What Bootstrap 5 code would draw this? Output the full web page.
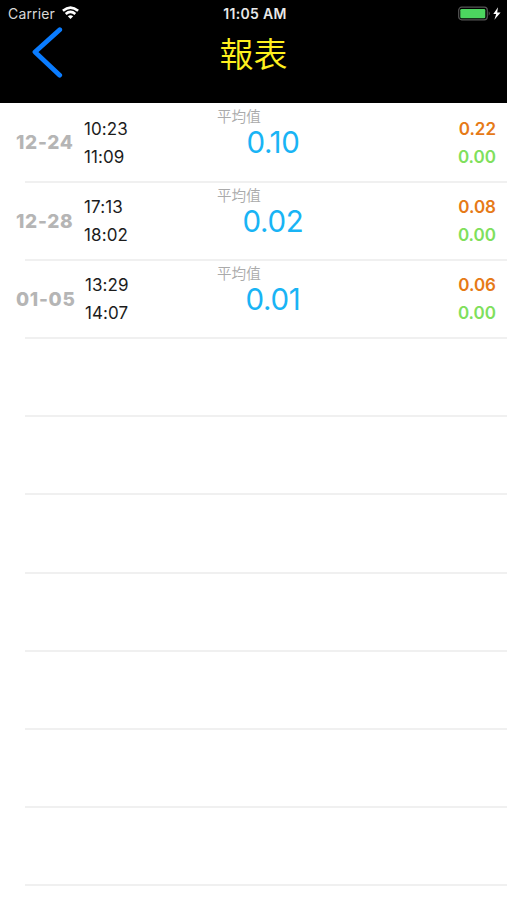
<!DOCTYPE html>
<html lang="zh-Hant">
<head>
<meta charset="utf-8">
<meta name="viewport" content="width=device-width, initial-scale=1">
<title>報表</title>
<link href="https://cdn.jsdelivr.net/npm/bootstrap@5.3.0/dist/css/bootstrap.min.css" rel="stylesheet">
<style>
body{font-family:Inter,"Noto Sans CJK TC",sans-serif;height:900px;overflow:hidden}
.app-head{height:103.4px}
.status{height:27px;font-size:14px;line-height:27px;padding:0 6px 0 8px}
.status>*{flex:1 1 0}
.status svg{margin-bottom:2px}
.wifi{margin-left:7px}
.carrier{color:#d8d8d8;letter-spacing:.15px}
.clock{font-weight:600;color:#e8e8e8;font-size:14px;letter-spacing:.3px;padding-left:1px}
.title-bar{display:grid;grid-template-columns:96px 1fr 96px;height:52px}
.back{padding:0 0 2px 32px;line-height:0;border:0;background:none;text-align:left}
.title{font-size:34px;font-weight:350;line-height:51px;color:#fff01e;font-family:"Noto Sans CJK TC",sans-serif}
.entry{height:78.2px;display:grid;grid-template-columns:68px 120px 138px 1fr;padding:0 11px 0 16px;position:relative}
.entry::after{content:"";position:absolute;left:25px;right:0;bottom:-1px;height:2px;background:#f0f0f0}
.day{font-size:19px;font-weight:800;color:#b5b5b5;line-height:79px;letter-spacing:.7px}
.pair{font-size:17px;line-height:27.8px;padding-top:12.4px}
.times{color:#1c1c1c;letter-spacing:.1px}
.times.nudge{padding-left:1px}
.vals{font-weight:600;text-align:right}
.hi{color:#e67a17}.lo{color:#7fe05c}
.avg-label{font-size:14.6px;font-weight:350;color:#aaa;line-height:20px;padding:4px 0 0 13px}
.avg{font-size:29.5px;line-height:31px;letter-spacing:-.3px;color:#19b4f5;text-align:center}
</style>
</head>
<body class="bg-white">
<header class="app-head bg-black">
  <div class="status d-flex align-items-center">
    <div class="carrier d-flex align-items-center">Carrier
      <svg class="wifi" width="17" height="13" viewBox="0 0 17 13" fill="none" stroke="#fff" stroke-width="2.6"><path d="M.9 4.8Q8.5-1.6 16.1 4.8M3.7 8Q8.5 3.9 13.3 8"/><path d="M5.8 10.3Q8.5 8.2 11.2 10.3L8.5 13Z" fill="#fff" stroke="none"/></svg>
    </div>
    <div class="clock text-center">11:05 AM</div>
    <div class="d-flex justify-content-end">
      <svg width="45" height="16" viewBox="0 0 45 16"><rect x="2.7" y="2.2" width="28.6" height="12.6" rx="3" fill="none" stroke="#555" stroke-width="1.2"/><rect x="4.3" y="4" width="25" height="9.2" rx="1.3" fill="#4cd65f"/><path d="M32.7 6.3q2.2 2.2 0 4.4z" fill="#555"/><path d="M42 2.3 37.3 9.1H40.2L38.4 14.8 44.6 7.5H41.2z" fill="#fff"/></svg>
    </div>
  </div>
  <div class="title-bar">
    <button class="back" aria-label="返回"><svg width="31" height="51" viewBox="0 0 31 51" fill="none" stroke="#0a7cff" stroke-width="4.8" stroke-linecap="round" stroke-linejoin="round"><path d="M27.7 2.7 3 25 27.7 48.2"/></svg></button>
    <h1 class="title text-center m-0">報表</h1>
  </div>
</header>
<main>
  <div class="entry"><div class="day">12-24</div><div class="pair times"><div>10:23</div><div>11:09</div></div><div><div class="avg-label">平均值</div><div class="avg">0.10</div></div><div class="pair vals"><div class="hi">0.22</div><div class="lo">0.00</div></div></div>
  <div class="entry"><div class="day">12-28</div><div class="pair times"><div>17:13</div><div>18:02</div></div><div><div class="avg-label">平均值</div><div class="avg">0.02</div></div><div class="pair vals"><div class="hi">0.08</div><div class="lo">0.00</div></div></div>
  <div class="entry"><div class="day">01-05</div><div class="pair times nudge"><div>13:29</div><div>14:07</div></div><div><div class="avg-label">平均值</div><div class="avg">0.01</div></div><div class="pair vals"><div class="hi">0.06</div><div class="lo">0.00</div></div></div>
  <div class="entry"></div><div class="entry"></div><div class="entry"></div><div class="entry"></div><div class="entry"></div><div class="entry"></div><div class="entry"></div>
</main>
<script src="https://cdn.jsdelivr.net/npm/bootstrap@5.3.0/dist/js/bootstrap.bundle.min.js"></script>
</body>
</html>
